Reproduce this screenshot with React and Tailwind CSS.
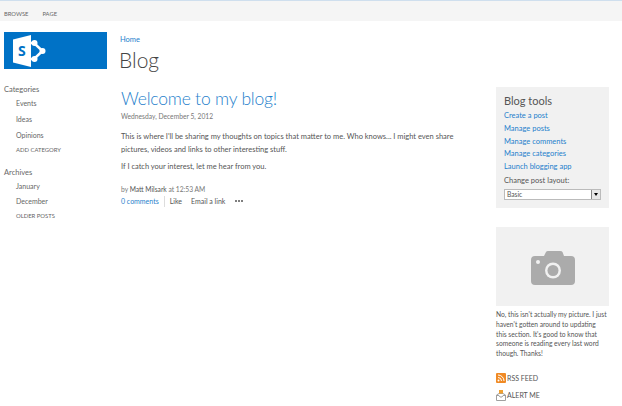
const Enlace = ({ children }) => (
  <div className="h-[12.8px] leading-[12.8px] text-[#1f7fcc] whitespace-nowrap">{children}</div>
);

const LogoSharePoint = () => (
  <svg width="33" height="32" viewBox="0 0 33 32">
    <path d="M0 4.500 L18 0 V32 L0 27.500 Z" fill="#fff" />
    <path d="M18 8 H21 L29.500 16 L21 24 H18" fill="none" stroke="#fff" strokeWidth="2.500" />
    <circle cx="21.500" cy="8" r="3" fill="#fff" />
    <circle cx="21.500" cy="24" r="3" fill="#fff" />
    <circle cx="29.500" cy="16" r="3" fill="#fff" />
    <text x="5" y="21" fontSize="14" fontWeight="700" fill="#0072c6" fontFamily="'Open Sans', sans-serif">S</text>
  </svg>
);

const Camara = () => (
  <svg width="44" height="34" viewBox="0 0 44 34">
    <path d="M4 5 H13 L15 1 Q15.500 0 17 0 H29 Q31 0 31.500 1 L33 5 H40 Q44 5 44 9 V30 Q44 34 40 34 H4 Q0 34 0 30 V9 Q0 5 4 5 Z" fill="#ababab" />
    <circle cx="22" cy="19.500" r="8" fill="#f1f1f1" />
    <circle cx="22" cy="19.500" r="5.500" fill="#ababab" />
    <circle cx="7" cy="11" r="2" fill="#f1f1f1" />
  </svg>
);

const Rss = () => (
  <svg width="10" height="10" viewBox="0 0 10 10">
    <rect width="10" height="10" rx="1" fill="#f08a24" />
    <circle cx="2.500" cy="7.500" r="1" fill="#fff" />
    <path d="M2 4.500 A3.500 3.500 0 0 1 5.500 8 M2 2 A6 6 0 0 1 8 8" stroke="#fff" strokeWidth="1" fill="none" />
  </svg>
);

const Alerta = () => (
  <svg width="10" height="11" viewBox="0 0 10 11">
    <path d="M0.500 5 L3 3.500 H7 L9.500 5 V10.500 H0.500 Z" fill="#fff" stroke="#a0a0a0" />
    <path d="M0.500 5.500 H3 L4 7 H6 L7 5.500 H9.500" fill="none" stroke="#a0a0a0" />
    <rect x="3" y="0" width="4" height="3.500" fill="#f0a030" />
  </svg>
);

const App = () => {
  return (
    <div className="w-[622px] h-[406px] overflow-hidden bg-white font-['Lato',sans-serif] text-[7.5px] text-[#555]">
      {/* Barra superior */}
      <div className="h-[21px] bg-[#f5f5f5] border-t border-[#cfdfee] flex items-center gap-[14px] pl-[4px] pt-[7px] text-[5.8px] text-[#666]">
        <span>BROWSE</span>
        <span>PAGE</span>
      </div>

      <div className="flex">
        {/* Columna izquierda */}
        <div className="w-[120px] shrink-0 pl-[4px]">
          <div className="w-[103px] h-[37px] mt-[11px] bg-[#0072c6] flex items-center pl-[9px]">
            <LogoSharePoint />
          </div>
          <div className="mt-[15px] text-[7.5px] text-[#666] leading-[12px]">Categories</div>
          <div className="pl-[12px] text-[#666]">
            <div className="text-[7px] leading-[12px] mt-[1px]">Events</div>
            <div className="text-[7px] leading-[12px] mt-[4px]">Ideas</div>
            <div className="text-[7px] leading-[12px] mt-[4px]">Opinions</div>
            <div className="text-[5.9px] leading-[12px] mt-[3px]">ADD CATEGORY</div>
          </div>
          <div className="mt-[11px] text-[7.5px] text-[#666] leading-[12px]">Archives</div>
          <div className="pl-[12px] text-[#666]">
            <div className="text-[7px] leading-[12px] mt-[1px]">January</div>
            <div className="text-[7px] leading-[12px] mt-[3px]">December</div>
            <div className="text-[5.9px] leading-[12px] mt-[3px]">OLDER POSTS</div>
          </div>
        </div>

        {/* Contenido */}
        <div className="w-[376px] shrink-0">
          <div className="mt-[13px] text-[7.5px] leading-[11px] text-[#1f7fcc]">Home</div>
          <div className="text-[21px] leading-[30px] font-light text-[#444] -ml-px">Blog</div>
          <div className="mt-[11px] ml-[1px] text-[17.500px] leading-[25px] font-light tracking-[-0.2px] text-[#1f7fcc]">Welcome to my blog!</div>
          <div className="ml-[1px] text-[6.7px] leading-[10px] text-[#777]">Wednesday, December 5, 2012</div>
          <div className="ml-[1px] mt-[10px] text-[7.5px] leading-[12.500px] whitespace-nowrap">
            <p>This is where I'll be sharing my thoughts on topics that matter to me. Who knows... I might even share</p>
            <p>pictures, videos and links to other interesting stuff.</p>
            <p className="mt-[5px]">If I catch your interest, let me hear from you.</p>
          </div>
          <div className="ml-[1px] mt-[10px] text-[6.7px] leading-[10px] text-[#777]">
            by <span className="text-[#555]">Matt Milsark</span> at 12:53 AM
          </div>
          <div className="ml-[1px] mt-[2px] flex items-center text-[7px] leading-[11px]">
            <span className="text-[#1f7fcc] pr-[5px] border-r border-[#ddd]">0 comments</span>
            <span className="ml-[5px]">Like</span>
            <span className="ml-[9px]">Email a link</span>
            <span className="ml-[10px] flex gap-[1.5px]">
              <span className="w-[1.5px] h-[1.5px] rounded-full bg-[#555]" />
              <span className="w-[1.5px] h-[1.5px] rounded-full bg-[#555]" />
              <span className="w-[1.5px] h-[1.5px] rounded-full bg-[#555]" />
            </span>
          </div>
        </div>

        {/* Columna derecha */}
        <div className="w-[113px] shrink-0">
          <div className="mt-[66px] bg-[#f1f1f1] h-[121px] pl-[8px] pt-[6px] text-[7.5px]">
            <div className="text-[11px] leading-[15px] text-[#555] mb-[2px]">Blog tools</div>
            <Enlace>Create a post</Enlace>
            <Enlace>Manage posts</Enlace>
            <Enlace>Manage comments</Enlace>
            <Enlace>Manage categories</Enlace>
            <Enlace>Launch blogging app</Enlace>
            <div className="leading-[13px] text-[#555]">Change post layout:</div>
            <div className="mt-[2px] w-[97px] h-[11px] bg-white border border-[#bbb] flex items-center justify-between pl-[2px] text-[6.7px]">
              <span>Basic</span>
              <span className="w-[9px] h-[9px] bg-[#e8e8e8] border-l border-[#888] flex items-center justify-center">
                <span className="border-x-[2.5px] border-x-transparent border-t-[3px] border-t-black" />
              </span>
            </div>
          </div>
          <div className="mt-[19px] h-[79px] pt-[2px] bg-[#f1f1f1] flex items-center justify-center">
            <Camara />
          </div>
          <div className="mt-[4px] text-[6.7px] leading-[9.800px] text-[#555] whitespace-nowrap">
            <p>No, this isn't actually my picture. I just</p>
            <p>haven't gotten around to updating</p>
            <p>this section. It's good to know that</p>
            <p>someone is reading every last word</p>
            <p>though. Thanks!</p>
          </div>
          <div className="mt-[14px] flex items-center text-[7px] leading-[10px] text-[#555]">
            <Rss />
            <span className="ml-[1px]">RSS FEED</span>
          </div>
          <div className="mt-[7px] flex items-center text-[7px] leading-[10px] text-[#555]">
            <Alerta />
            <span className="ml-[1px]">ALERT ME</span>
          </div>
        </div>
      </div>
    </div>
  );
};

export default App;
